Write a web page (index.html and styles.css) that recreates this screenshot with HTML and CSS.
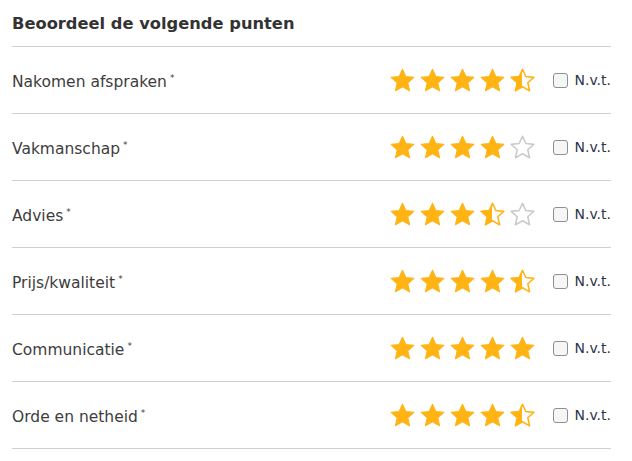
FILE: index.html
```html
<!DOCTYPE html>
<html lang="nl">
<head>
<meta charset="utf-8">
<link rel="stylesheet" href="styles.css">
</head>
<body>
<svg width="0" height="0" class="defs" aria-hidden="true">
  <defs>
    <linearGradient id="half" x1="0" x2="1" y1="0" y2="0">
      <stop offset="50%" stop-color="#ffb414"/>
      <stop offset="50%" stop-color="#ffffff"/>
    </linearGradient>
    <path id="star" d="M12 1.2 L15.2 8.2 L22.9 9 L17.1 14.2 L18.8 21.9 L12 18 L5.2 21.9 L6.9 14.2 L1.1 9 L8.8 8.2 Z"/>
  </defs>
</svg>
<div class="panel">
  <h2 class="title">Beoordeel de volgende punten</h2>
  <div class="row">
    <span class="label">Nakomen afspraken<sup>*</sup></span>
    <div class="stars" data-v="4.5"></div>
    <label class="nvt"><span class="box"></span>N.v.t.</label>
  </div>
  <div class="row">
    <span class="label">Vakmanschap<sup>*</sup></span>
    <div class="stars" data-v="4"></div>
    <label class="nvt"><span class="box"></span>N.v.t.</label>
  </div>
  <div class="row">
    <span class="label">Advies<sup>*</sup></span>
    <div class="stars" data-v="3.5"></div>
    <label class="nvt"><span class="box"></span>N.v.t.</label>
  </div>
  <div class="row">
    <span class="label">Prijs/kwaliteit<sup>*</sup></span>
    <div class="stars" data-v="4.5"></div>
    <label class="nvt"><span class="box"></span>N.v.t.</label>
  </div>
  <div class="row">
    <span class="label">Communicatie<sup>*</sup></span>
    <div class="stars" data-v="5"></div>
    <label class="nvt"><span class="box"></span>N.v.t.</label>
  </div>
  <div class="row">
    <span class="label">Orde en netheid<sup>*</sup></span>
    <div class="stars" data-v="4.5"></div>
    <label class="nvt"><span class="box"></span>N.v.t.</label>
  </div>
</div>
<script src="script.js"></script>
</body>
</html>
```

FILE: script.js
```js
document.querySelectorAll('.stars').forEach(function (el) {
  var v = parseFloat(el.getAttribute('data-v'));
  var html = '';
  for (var i = 1; i <= 5; i++) {
    var cls = v >= i ? 'full' : (v >= i - 0.5 ? 'half' : 'empty');
    html += '<svg class="star ' + cls + '" viewBox="0 0 24 24" width="25" height="25"><use href="#star"/></svg>';
  }
  el.innerHTML = html;
});
```

FILE: styles.css
```css
html, body {
  margin: 0;
  padding: 0;
  background: #fff;
}
body {
  font-family: "DejaVu Sans", "Open Sans", sans-serif;
  color: #3d3d3d;
}
.defs {
  position: absolute;
}
.panel {
  padding: 0 21px 0 12px;
}
.title {
  margin: 0;
  height: 46px;
  display: flex;
  align-items: center;
  font-size: 16.3px;
  font-weight: 700;
  color: #333;
  border-bottom: 1px solid #cfcfcf;
}
.row {
  display: flex;
  align-items: center;
  height: 66px;
  border-bottom: 1px solid #cfcfcf;
}
.label {
  flex: 1;
  font-size: 15.5px;
  color: #3d3d3d;
  padding-top: 3px;
}
.label sup {
  font-size: 9px;
  margin-left: 3px;
  vertical-align: 6px;
}
.stars {
  display: flex;
  gap: 5px;
  margin-right: 18px;
}
.star {
  display: block;
}
.star.full use {
  fill: #ffb414;
  stroke: #ffb414;
  stroke-width: 1;
  stroke-linejoin: round;
}
.star.half use {
  fill: url(#half);
  stroke: #ffb414;
  stroke-width: 1.5;
  stroke-linejoin: round;
}
.star.empty use {
  fill: #fff;
  stroke: #cacaca;
  stroke-width: 1.5;
  stroke-linejoin: round;
}
.nvt {
  display: flex;
  align-items: center;
  gap: 6px;
  font-size: 14px;
  color: #2f3348;
}
.box {
  width: 13px;
  height: 13px;
  border: 1px solid #8f8f8f;
  border-radius: 3px;
  background: #f6f6f6;
}
```
